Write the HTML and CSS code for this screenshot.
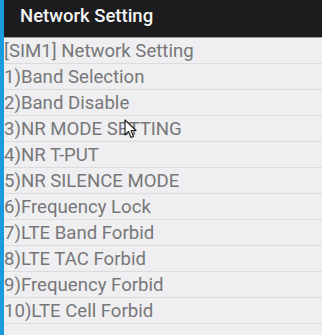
FILE: index.html
```html
<!DOCTYPE html>
<html lang="en">
<head>
    <meta charset="UTF-8">
    <title>Network Setting</title>
    <link rel="stylesheet" href="styles.css">
</head>
<body>
    <div class="screen">
        <div class="edge"></div>
        <div class="app">
            <nav class="toolbar">
                <h1>Network Setting</h1>
            </nav>
            <ul class="menu">
                <li>[SIM1] Network Setting</li>
                <li>1)Band Selection</li>
                <li>2)Band Disable</li>
                <li>3)NR MODE SETTING</li>
                <li>4)NR T-PUT</li>
                <li>5)NR SILENCE MODE</li>
                <li>6)Frequency Lock</li>
                <li>7)LTE Band Forbid</li>
                <li>8)LTE TAC Forbid</li>
                <li>9)Frequency Forbid</li>
                <li>10)LTE Cell Forbid</li>
            </ul>
        </div>
    </div>
    <svg class="cursor" width="14" height="20" viewBox="0 0 14 20">
        <path d="M1 1 L1 16 L4.5 12.5 L7 18.5 L9.5 17.5 L7 11.5 L12 11.5 Z" fill="#fff" stroke="#222" stroke-width="1.2" stroke-linejoin="round"/>
    </svg>
</body>
</html>
```

FILE: styles.css
```css
html,
body {
    margin: 0;
    background: #efeff1;
    font-family: Roboto, "Noto Sans", sans-serif;
}

.screen {
    display: flex;
    height: 335px;
    overflow: hidden;
}

.edge {
    width: 4px;
    flex: none;
    background: #1a9be0;
}

.app {
    flex: 1;
    min-width: 0;
}

.toolbar {
    box-sizing: border-box;
    height: 38px;
    background: #1c1c1e;
    border-bottom: 1px solid #9a9a9a;
    display: flex;
    align-items: center;
    padding: 0 0 6px 16px;
}

.toolbar h1 {
    margin: 0;
    color: #f4f4f4;
    font-size: 18.5px;
    font-weight: 500;
}

.menu {
    list-style: none;
    margin: 0;
    padding: 0;
}

.menu li {
    height: 25px;
    line-height: 27px;
    border-bottom: 1px solid #dcdcde;
    color: #777779;
    font-size: 18.6px;
    white-space: nowrap;
}

/* mouse pointer over the list */
.cursor {
    position: absolute;
    left: 124px;
    top: 119px;
}
```
